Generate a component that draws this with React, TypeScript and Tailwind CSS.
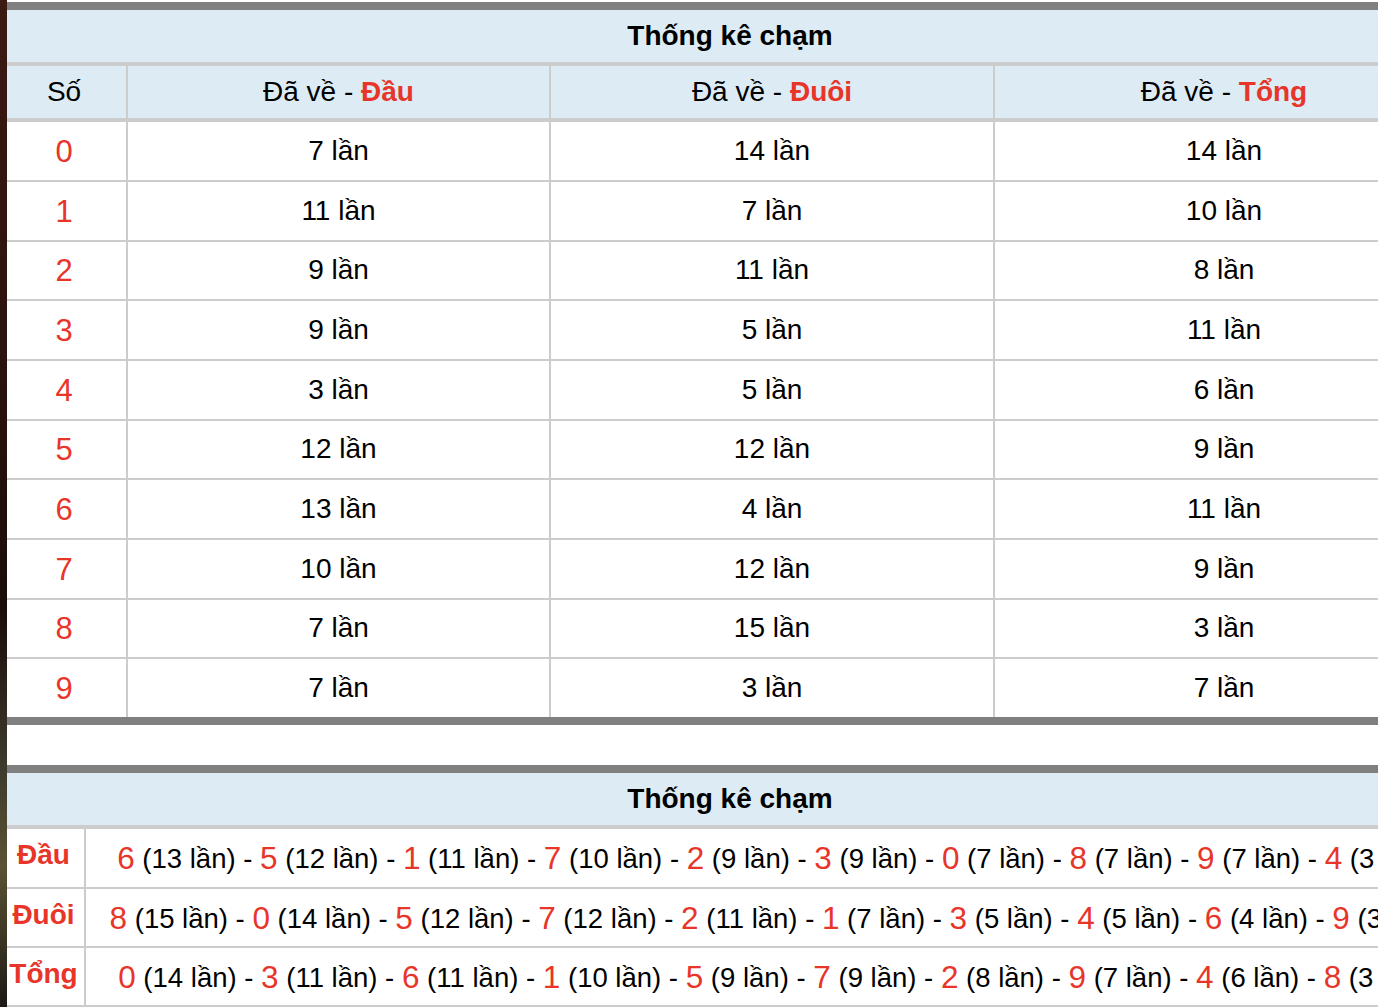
import React from "react";

const RED = "text-[#e8352a]";

const top: [number, number, number, number][] = [
  [0, 7, 14, 14],
  [1, 11, 7, 10],
  [2, 9, 11, 8],
  [3, 9, 5, 11],
  [4, 3, 5, 6],
  [5, 12, 12, 9],
  [6, 13, 4, 11],
  [7, 10, 12, 9],
  [8, 7, 15, 3],
  [9, 7, 3, 7],
];

const bottom: { label: string; items: [number, number][] }[] = [
  { label: "Đầu", items: [[6, 13], [5, 12], [1, 11], [7, 10], [2, 9], [3, 9], [0, 7], [8, 7], [9, 7], [4, 3]] },
  { label: "Đuôi", items: [[8, 15], [0, 14], [5, 12], [7, 12], [2, 11], [1, 7], [3, 5], [4, 5], [6, 4], [9, 3]] },
  { label: "Tổng", items: [[0, 14], [3, 11], [6, 11], [1, 10], [5, 9], [7, 9], [2, 8], [9, 7], [4, 6], [8, 3]] },
];

export default function App() {
  return (
    <div className="w-[1378px] h-[1007px] overflow-hidden flex items-start bg-white font-['Liberation_Sans',Arial,sans-serif] text-black">
      <div className="w-[7px] shrink-0 h-[1007px] bg-[linear-gradient(to_bottom,#3b1a12_0%,#2a120c_40%,#1a0c08_60%,#3d3a2c_76%,#5b5234_86%,#1c1a14_100%)]" />
      <div className="w-[1452px] shrink-0 pt-[2px]">
        {/* Top table */}
        <div className="border-t-[8px] border-[#808080]">
          <div className="h-[52px] w-[1446px] bg-[#dcebf4] flex items-center justify-center text-[28px] font-bold">
            Thống kê chạm
          </div>
          <div className="h-[60px] bg-[#dcebf4] border-t-[4px] border-b-[4px] border-[#cccccc] flex text-[28px]">
            <div className="w-[119px] pr-[5px] flex items-center justify-center">Số</div>
            <div className="w-[423px] border-l-2 border-[#cccccc] flex items-center justify-center">
              Đã về -&nbsp;<span className={`font-bold ${RED}`}>Đầu</span>
            </div>
            <div className="w-[444px] border-l-2 border-[#cccccc] flex items-center justify-center">
              Đã về -&nbsp;<span className={`font-bold ${RED}`}>Đuôi</span>
            </div>
            <div className="w-[460px] border-l-2 border-[#cccccc] flex items-center justify-center">
              Đã về -&nbsp;<span className={`font-bold ${RED}`}>Tổng</span>
            </div>
          </div>
          {top.map(([n, a, b, c], i) => (
            <div
              key={n}
              className={`flex text-[28px] ${i === 0 ? "h-[58px]" : "h-[59.67px] border-t-2 border-[#cccccc]"}`}
            >
              <div className={`w-[119px] pr-[5px] pt-[2px] flex items-center justify-center text-[31px] ${RED}`}>{n}</div>
              <div className="w-[423px] border-l-2 border-[#cccccc] flex items-center justify-center">{a} lần</div>
              <div className="w-[444px] border-l-2 border-[#cccccc] flex items-center justify-center">{b} lần</div>
              <div className="w-[460px] border-l-2 border-[#cccccc] flex items-center justify-center">{c} lần</div>
            </div>
          ))}
          <div className="h-[8px] bg-[#808080]" />
        </div>

        <div className="h-[40px]" />

        {/* Bottom table */}
        <div className="border-t-[8px] border-[#808080]">
          <div className="h-[52px] bg-[#dcebf4] border-b-[4px] border-[#cccccc] box-content">
            <div className="h-[52px] w-[1446px] flex items-center justify-center text-[28px] font-bold">
              Thống kê chạm
            </div>
          </div>
          {bottom.map((row, i) => (
            <div key={row.label} className={`flex ${i === 0 ? "h-[58px]" : "h-[59px] border-t-2 border-[#cccccc]"}`}>
              <div className={`w-[77px] pr-[4px] flex items-center justify-center pb-[5px] text-[28px] font-bold ${RED}`}>
                {row.label}
              </div>
              <div className="flex-1 border-l-2 border-[#cccccc] flex items-center justify-center whitespace-nowrap text-[27.5px] pt-[2px]">
                {row.items.map(([d, cnt], j) => (
                  <React.Fragment key={j}>
                    <span className={`text-[31.5px] ${RED}`}>{d}</span>
                    <span>&nbsp;({cnt} lần)</span>
                    {j < row.items.length - 1 && <span>&nbsp;-&nbsp;</span>}
                  </React.Fragment>
                ))}
              </div>
            </div>
          ))}
          <div className="h-[8px] bg-[#808080] border-t-2 border-[#cccccc]" />
        </div>
      </div>
    </div>
  );
}
